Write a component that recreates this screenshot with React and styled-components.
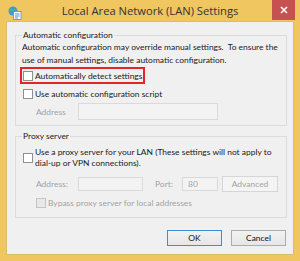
import React from "react";
import styled, { createGlobalStyle } from "styled-components";

const GlobalStyle = createGlobalStyle`
  body {
    margin: 0;
    font-family: "Open Sans", "Noto Sans", sans-serif;
  }
`;

const Frame = styled.div`
  width: 300px;
  height: 261px;
  box-sizing: border-box;
  padding: 0 6px 6px 6px;
  background: #f0c660;
  display: flex;
  flex-direction: column;
`;

const TitleBar = styled.div`
  height: 21px;
  display: grid;
  grid-template-columns: 1fr auto 1fr;
  align-items: start;
`;

const AppIcon = styled.div`
  padding: 3px 0 0 2px;
  height: 16px;
`;

const Title = styled.div`
  font-size: 11.2px;
  line-height: 21px;
  color: #333;
  white-space: nowrap;
`;

const CloseButton = styled.div`
  justify-self: end;
  width: 23px;
  height: 20px;
  margin-right: -1px;
  background: #c75050;
  display: flex;
  align-items: center;
  justify-content: center;
`;

const Client = styled.div`
  flex: 1;
  background: #f0f0f0;
  border: 1px solid #d9bd6c;
  padding: 0 6px 0 8px;
  display: flex;
  flex-direction: column;
  font-family: Lato, "Open Sans", sans-serif;
  font-size: 8.45px;
  color: #1a1a1a;
  white-space: nowrap;
`;

const Group = styled.div`
  margin-top: ${(p) => p.$top}px;
  height: ${(p) => p.$height}px;
  box-sizing: border-box;
  border: 1px solid #dcdcdc;
  padding: 0 0 0 6px;
`;

const Legend = styled.div`
  width: fit-content;
  margin: -7px 0 0 0;
  padding: 0 1px;
  background: #f0f0f0;
  line-height: 12px;
`;

const Description = styled.div`
  line-height: 12.5px;
  white-space: pre;
`;

const Row = styled.div`
  display: flex;
  align-items: center;
  gap: 2px;
  margin-top: ${(p) => p.$top || 0}px;
  margin-left: ${(p) => p.$left || 0}px;
  height: ${(p) => (p.$height ? `${p.$height}px` : "auto")};
  color: ${(p) => (p.$disabled ? "#a3a3a3" : "inherit")};
`;

const Highlight = styled.div`
  width: 125px;
  height: 17px;
  box-sizing: border-box;
  margin: 1px 0 0 -2px;
  border: 2px solid #e3242b;
  padding-left: 1px;
  display: flex;
  align-items: center;
  gap: 2px;
`;

const Check = styled.span`
  width: 10px;
  height: 10px;
  box-sizing: border-box;
  flex: none;
  border: 1px solid ${(p) => (p.$disabled ? "#c4c4c4" : "#8f8f8f")};
  background: ${(p) => (p.$disabled ? "#e8e8e8" : "#fff")};
`;

const MultiLine = styled.div`
  line-height: 11px;
  white-space: pre;
`;

const FieldLabel = styled.span`
  width: ${(p) => p.$width}px;
  margin-left: ${(p) => p.$left || 0}px;
  flex: none;
  color: #a3a3a3;
`;

const Input = styled.div`
  width: ${(p) => p.$width}px;
  height: ${(p) => p.$height || 17}px;
  box-sizing: border-box;
  flex: none;
  border: 1px solid #dadada;
  background: #f3f3f3;
  color: #a3a3a3;
  padding-left: 5px;
  display: flex;
  align-items: center;
`;

const Button = styled.div`
  width: ${(p) => p.$width || 55}px;
  height: 16px;
  box-sizing: border-box;
  flex: none;
  display: flex;
  align-items: center;
  justify-content: center;
  border: 1px solid ${(p) => (p.$default ? "#3c8fd6" : p.$disabled ? "#d6d6d6" : "#acacac")};
  background: ${(p) =>
    p.$disabled ? "#f4f4f4" : "linear-gradient(#f2f2f2, #e6e6e6)"};
  color: ${(p) => (p.$disabled ? "#a3a3a3" : "#111")};
  margin-left: ${(p) => p.$left || 0}px;
`;

const ButtonBar = styled.div`
  margin-top: 12px;
  display: flex;
  justify-content: flex-end;
  gap: 9px;
  padding-right: 1px;
`;

const GlobeIcon = () => (
  <svg width="14" height="14" viewBox="0 0 14 14">
    <circle cx="5" cy="5" r="4.5" fill="#3a9bd8" />
    <path d="M2 3 Q4 2 5 4 Q4 6 2 5 Z M6 1.5 Q8 3 7 5 Q6 4 6 1.5 Z" fill="#5cb85c" />
    <rect x="5.5" y="5.5" width="7.5" height="8" fill="#fff" stroke="#5a8fc0" strokeWidth="0.8" />
    <path d="M7 8h4.5M7 10h4.5M7 12h3" stroke="#3a7bc8" strokeWidth="0.9" />
  </svg>
);

const CloseIcon = () => (
  <svg width="8" height="8" viewBox="0 0 8 8">
    <path d="M1 1L7 7M7 1L1 7" stroke="#fff" strokeWidth="1.6" />
  </svg>
);

export default function App() {
  return (
    <>
      <GlobalStyle />
      <Frame>
        <TitleBar>
          <AppIcon>
            <GlobeIcon />
          </AppIcon>
          <Title>Local Area Network (LAN) Settings</Title>
          <CloseButton>
            <CloseIcon />
          </CloseButton>
        </TitleBar>
        <Client>
          <Group $top={13} $height={91}>
            <Legend>Automatic configuration</Legend>
            <Description>
              {"Automatic configuration may override manual settings.  To ensure the\nuse of manual settings, disable automatic configuration."}
            </Description>
            <Highlight>
              <Check />
              <span>Automatically detect settings</span>
            </Highlight>
            <Row $top={3} $left={1} $height={13}>
              <Check />
              <span>Use automatic configuration script</span>
            </Row>
            <Row $top={3} $left={14}>
              <FieldLabel $width={40}>Address</FieldLabel>
              <Input $width={140} />
            </Row>
          </Group>
          <Group $top={10} $height={82}>
            <Legend>Proxy server</Legend>
            <Row $top={5} $left={1}>
              <Check />
              <MultiLine>
                {"Use a proxy server for your LAN (These settings will not apply to\ndial-up or VPN connections)."}
              </MultiLine>
            </Row>
            <Row $top={7} $left={14}>
              <FieldLabel $width={40}>Address:</FieldLabel>
              <Input $width={65} $height={14} />
              <FieldLabel $width={25} $left={10}>Port:</FieldLabel>
              <Input $width={36} $height={14}>80</Input>
              <Button $disabled $width={56} $left={2}>Advanced</Button>
            </Row>
            <Row $top={6} $left={14} $disabled>
              <Check $disabled />
              <span>Bypass proxy server for local addresses</span>
            </Row>
          </Group>
          <ButtonBar>
            <Button $default>OK</Button>
            <Button>Cancel</Button>
          </ButtonBar>
        </Client>
      </Frame>
    </>
  );
}
